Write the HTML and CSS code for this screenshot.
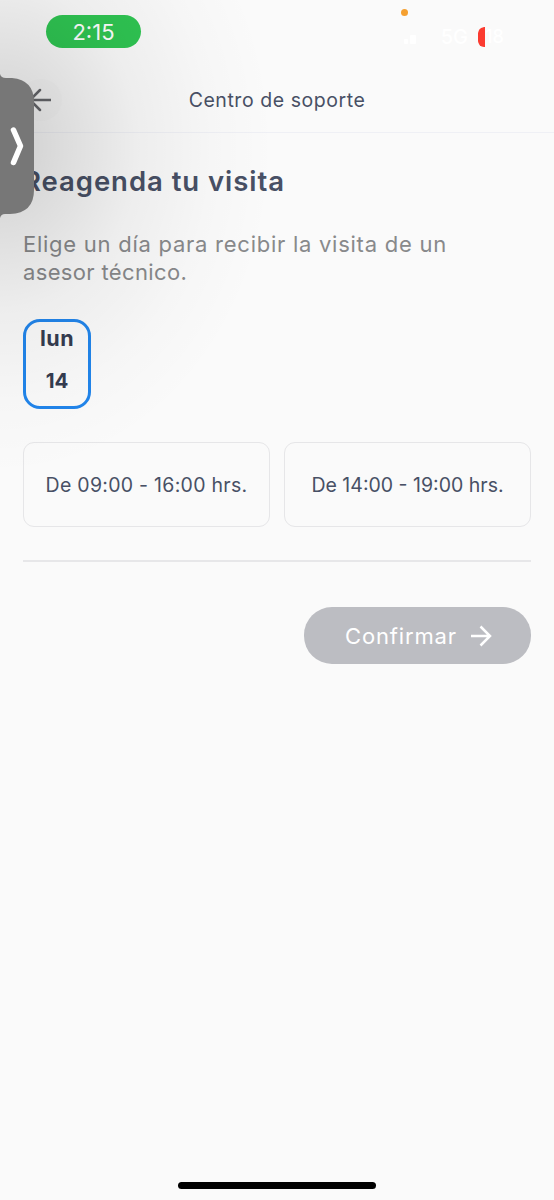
FILE: index.html
```html
<!DOCTYPE html>
<html lang="es">
<head>
    <meta charset="UTF-8">
    <meta name="viewport" content="width=device-width, initial-scale=1.0">
    <title>Centro de soporte</title>
    <link rel="stylesheet" href="styles.css">
</head>
<body>
    <div class="screen">
        <div class="status-bar">
            <span class="clock">2:15</span>
            <span class="mic-dot"></span>
            <div class="status-icons">
                <svg class="signal" width="22" height="16" viewBox="0 0 22 16" fill="#fff">
                    <rect x="0" y="10" width="4" height="5" rx="1"/>
                    <rect x="6" y="6" width="6" height="9" rx="1"/>
                </svg>
                <span class="network">5G</span>
                <div class="battery"><span class="battery-level"></span>18</div>
            </div>
        </div>

        <header class="header">
            <button class="back" aria-label="Volver">
                <svg width="22" height="24" viewBox="0 0 22 24" fill="none" stroke="#66676b" stroke-width="2.5" stroke-linecap="round">
                    <path d="M21.500 12H1M11 2L1 12l10 10"/>
                </svg>
            </button>
            <span class="header-title">Centro de soporte</span>
        </header>

        <main class="content">
            <h1>Reagenda tu visita</h1>
            <p class="intro">Elige un día para recibir la visita de un<br><span class="intro-end">asesor técnico.</span></p>

            <button class="day">
                <span class="day-name">lun</span>
                <span class="day-number">14</span>
            </button>

            <div class="slots">
                <button class="slot slot-early">De 09:00 - 16:00 hrs.</button>
                <button class="slot">De 14:00 - 19:00 hrs.</button>
            </div>

            <button class="confirm">
                <span>Confirmar</span>
                <svg width="22" height="22" viewBox="0 0 22 22" fill="none" stroke="#fff" stroke-width="2.5">
                    <path d="M1 11H19.500M10.500 1.500L20 11l-9.500 9.500"/>
                </svg>
            </button>
        </main>

        <div class="home-bar"></div>

        <!-- Collapsed floating video -->
        <div class="tab-shadow"></div>
        <svg class="side-tab" width="35" height="144" viewBox="0 0 35 144">
            <path d="M0 0Q1 4 6 4H12Q34 6 34 28V116Q34 139 10 140H5Q1 140 0 144Z" fill="#777"/>
            <path d="M13.500 56L20.500 72L13.500 88.500" fill="none" stroke="#fff" stroke-width="5.500" stroke-linecap="round" stroke-linejoin="round"/>
        </svg>
    </div>
</body>
</html>
```

FILE: styles.css
```css
* {
    box-sizing: border-box;
}
body {
    margin: 0;
    font-family: Inter, sans-serif;
    background-color: #fafafa;
    color: #485065;
}
button {
    font-family: inherit;
    color: inherit;
    background: none;
    padding: 0;
    border: none;
}
.screen {
    position: relative;
    height: 1200px;
    display: flex;
    flex-direction: column;
    overflow: hidden;
}
.status-bar {
    position: relative;
    height: 67px;
    padding: 15px 38px 0 46px;
    display: flex;
    justify-content: space-between;
    align-items: flex-start;
}
.clock {
    width: 95px;
    height: 33px;
    border-radius: 17px;
    background-color: #2fc552;
    color: #fff;
    font-size: 22px;
    line-height: 34px;
    text-align: center;
}
.mic-dot {
    position: absolute;
    left: 401px;
    top: 9px;
    width: 7px;
    height: 7px;
    border-radius: 50%;
    background-color: #f5a030;
}
.status-icons {
    display: flex;
    align-items: center;
    margin-top: 11px;
    color: #fff;
    font-size: 20px;
    font-weight: 500;
    line-height: 22px;
}
.network {
    margin: 0 10px 0 15px;
}
.battery {
    display: flex;
    align-items: center;
    width: 38px;
    height: 21px;
    border-radius: 6px;
    font-size: 18px;
    overflow: hidden;
}
.battery-level {
    flex: none;
    width: 7px;
    height: 20px;
    background-color: #fb3b30;
    border-radius: 6px 0 0 6px;
}
.header {
    height: 66px;
    padding-left: 20px;
    display: grid;
    grid-template-columns: 42px 1fr 62px;
    align-items: center;
    border-bottom: 1px solid #eff0f5;
}
.back {
    width: 42px;
    height: 42px;
    border-radius: 50%;
    background-color: #f7f7f7;
    padding-left: 9px;
    display: flex;
    align-items: center;
}
.header-title {
    text-align: center;
    font-size: 19.5px;
    letter-spacing: 0.55px;
}
.content {
    display: flex;
    flex-direction: column;
    padding: 30px 23px 0;
}
h1 {
    margin: 0;
    font-size: 27.5px;
    font-weight: 600;
    line-height: 36px;
    letter-spacing: 0.95px;
}
.intro {
    margin: 32px 0 0;
    font-size: 22px;
    line-height: 27.5px;
    letter-spacing: 0.74px;
    color: #88898b;
}
.intro-end {
    letter-spacing: 0.35px;
}
.day {
    width: 68px;
    height: 90px;
    margin-top: 33px;
    border: 3px solid #2185eb;
    border-radius: 17px;
    display: flex;
    flex-direction: column;
    align-items: center;
    gap: 15px;
    padding-top: 2px;
    color: #353c50;
    font-size: 20.5px;
    font-weight: 700;
    line-height: 28px;
    justify-content: flex-start;
}
.day-name {
    font-size: 21.5px;
    letter-spacing: 0.5px;
}
.slots {
    display: grid;
    grid-template-columns: 1fr 1fr;
    gap: 14px;
    margin-top: 33px;
    padding-bottom: 33px;
    border-bottom: 2px solid #e7e7e9;
}
.slot {
    height: 85px;
    border: 1.5px solid #e6e6e8;
    border-radius: 11px;
    font-size: 19.5px;
    line-height: 24px;
    padding-top: 1px;
    white-space: nowrap;
}
.slot-early {
    letter-spacing: 0.28px;
}
.confirm {
    align-self: flex-end;
    width: 227px;
    height: 57px;
    margin-top: 45px;
    padding-left: 2px;
    border-radius: 28px;
    background-color: #bcbdc2;
    color: #fff;
    display: flex;
    align-items: center;
    justify-content: center;
    gap: 13px;
    font-size: 22px;
    letter-spacing: 0.85px;
}
.home-bar {
    width: 198px;
    height: 7px;
    margin: auto auto 11px;
    border-radius: 4px;
    background-color: #000;
}
.tab-shadow {
    position: absolute;
    left: 0;
    top: 0;
    width: 300px;
    height: 500px;
    background: radial-gradient(ellipse 275px 330px at 0 146px, rgba(0, 0, 0, 0.18), rgba(0, 0, 0, 0.12) 22%, rgba(0, 0, 0, 0.05) 50%, rgba(0, 0, 0, 0.015) 78%, transparent);
    pointer-events: none;
}
.side-tab {
    position: absolute;
    left: 0;
    top: 74px;
}
```
